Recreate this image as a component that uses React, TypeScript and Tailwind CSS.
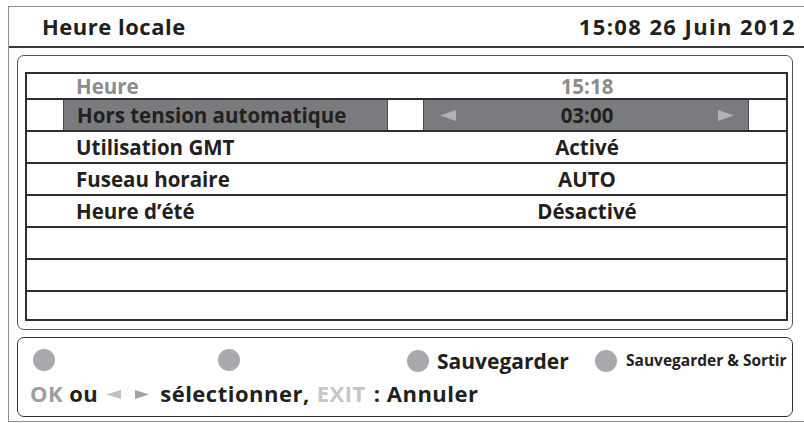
const rows = [
  { label: "Heure", value: "15:18", dim: true },
  { label: "Hors tension automatique", value: "03:00", selected: true },
  { label: "Utilisation GMT", value: "Activé" },
  { label: "Fuseau horaire", value: "AUTO" },
  { label: "Heure d’été", value: "Désactivé" },
  { label: "", value: "" },
  { label: "", value: "" },
  { label: "", value: "" },
]

const heights = ["h-[26px]", "h-[32px]", "h-[32px]", "h-[32px]", "h-[32px]", "h-[32px]", "h-[32px]", "h-[29px]"]

function Dot() {
  return <span className="inline-block h-[22px] w-[22px] shrink-0 rounded-full bg-[#a7a9ac]" />
}

function Tri({ dir, w, h, color }: { dir: "left" | "right"; w: number; h: number; color: string }) {
  const points = dir === "left" ? `0,${h / 2} ${w},0 ${w},${h}` : `0,0 ${w},${h / 2} 0,${h}`
  return (
    <svg width={w} height={h} viewBox={`0 0 ${w} ${h}`} className="shrink-0">
      <polygon points={points} fill={color} />
    </svg>
  )
}

export default function App() {
  return (
    <div className="h-[423px] w-[804px] overflow-hidden bg-white font-['Open_Sans',sans-serif] text-[#231f20]">
      <div className="ml-[8px] mt-[6px] h-[416px] w-[810px] border-y border-l border-[#8d8d8d]">
        {/* header */}
        <div className="flex h-[41px] items-center justify-between border-b-2 border-[#3a3a3a] pl-[33px] pr-[22px] pb-[1px] text-[22px] font-bold leading-none">
          <span className="tracking-[0.5px]">Heure locale</span>
          <span className="tracking-[1.4px]">15:08 26 Juin 2012</span>
        </div>

        {/* settings panel */}
        <div className="ml-[8px] mt-[7px] h-[275px] w-[776px] rounded-[7px] border-[1.5px] border-[#555] pl-[7px] pr-[4px] pt-[16px]">
          <div className="border-x-2 border-b-2 border-[#2f2f2f]">
            {rows.map((row, i) => (
              <div
                key={i}
                className={`grid grid-cols-[36px_325px_35px_326px_1fr] border-t-2 border-[#2f2f2f] text-[20.5px] font-bold leading-none ${heights[i]}`}
              >
                <div />
                <div
                  className={`flex items-center pl-[13px] ${row.selected ? "border-x border-[#4a4a4a] bg-[#7a7b7e]" : ""} ${row.dim ? "text-[#8c8c8c]" : ""}`}
                >
                  {row.label}
                </div>
                <div />
                <div
                  className={`flex items-center justify-between pl-[16px] pr-[14px] ${row.selected ? "border-x border-[#4a4a4a] bg-[#7a7b7e]" : ""} ${row.dim ? "text-[#8c8c8c]" : ""}`}
                >
                  <span className="flex w-[16px]">
                    {row.selected && <Tri dir="left" w={16} h={11} color="#b1b2b4" />}
                  </span>
                  <span>{row.value}</span>
                  <span className="flex w-[16px] justify-end">
                    {row.selected && <Tri dir="right" w={16} h={11} color="#b1b2b4" />}
                  </span>
                </div>
                <div />
              </div>
            ))}
          </div>
        </div>

        {/* legend panel */}
        <div className="ml-[8px] mt-[7px] h-[80px] w-[776px] rounded-[7px] border-[1.5px] border-[#333] pl-[15px] pt-[11px]">
          <div className="flex h-[24px] items-center font-bold leading-none whitespace-nowrap">
            <div className="w-[185px] shrink-0">
              <Dot />
            </div>
            <div className="w-[189px] shrink-0">
              <Dot />
            </div>
            <div className="flex w-[188px] shrink-0 items-center gap-[8px]">
              <Dot />
              <span className="text-[21px]">Sauvegarder</span>
            </div>
            <div className="flex shrink-0 items-center gap-[9px]">
              <Dot />
              <span className="text-[15.5px]">Sauvegarder &amp; Sortir</span>
            </div>
          </div>
          <div className="-ml-[3px] mt-[9px] flex items-center text-[22px] font-bold leading-none tracking-[0.5px] whitespace-nowrap">
            <span className="text-[#9d9d9d]">OK</span>
            <span className="ml-[6px]">ou</span>
            <span className="ml-[8px] mt-[2px]">
              <Tri dir="left" w={15} h={9} color="#c2c2c2" />
            </span>
            <span className="ml-[14px] mt-[2px]">
              <Tri dir="right" w={14} h={9} color="#a3a3a3" />
            </span>
            <span className="ml-[11px]">sélectionner,</span>
            <span className="ml-[7px] text-[#c6c6c6]">EXIT</span>
            <span className="ml-[8px]">: Annuler</span>
          </div>
        </div>
      </div>
    </div>
  )
}
